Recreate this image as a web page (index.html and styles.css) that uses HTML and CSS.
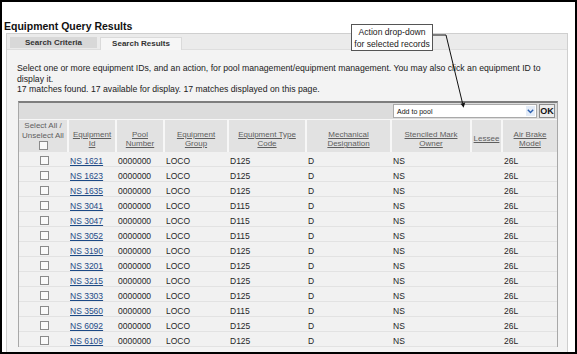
FILE: index.html
```html
<!DOCTYPE html>
<html>
<head>
<meta charset="utf-8">
<title>Equipment Query Results</title>
<link rel="stylesheet" href="styles.css">
</head>
<body>
<div class="frame">
  <h1 class="title">Equipment Query Results</h1>
  <div class="tabset">
    <div class="tabs">
      <div class="tab tab-off">Search Criteria</div>
      <div class="tab tab-on">Search Results</div>
    </div>
    <div class="panel">
      <p class="intro">Select one or more equipment IDs, and an action, for pool management/equipment management. You may also click an equipment ID to<br>display it.<br>17 matches found. 17 available for display. 17 matches displayed on this page.</p>
      <table class="results">
        <colgroup>
          <col class="c1"><col class="c2"><col class="c3"><col class="c4"><col class="c5"><col class="c6"><col class="c7"><col class="c8"><col class="c9">
        </colgroup>
        <thead>
          <tr class="toolbar">
            <td colspan="9">
              <div class="toolbar-inner">
                <div class="select">
                  <span class="select-text">Add to pool</span>
                  <span class="select-btn"><svg width="7" height="5" viewBox="0 0 7 5"><path d="M0.8 0.8 L3.5 3.6 L6.2 0.8" fill="none" stroke="#2a5fb0" stroke-width="1.4"/></svg></span>
                </div>
                <div class="ok">OK</div>
              </div>
            </td>
          </tr>
          <tr class="head">
            <th class="selall">Select All /<br>Unselect All<br><span class="cb cb-head"></span></th>
            <th><span class="hl">Equipment<br>Id</span></th>
            <th><span class="hl">Pool<br>Number</span></th>
            <th><span class="hl">Equipment<br>Group</span></th>
            <th><span class="hl">Equipment Type<br>Code</span></th>
            <th><span class="hl">Mechanical<br>Designation</span></th>
            <th><span class="hl">Stenciled Mark<br>Owner</span></th>
            <th><span class="hl">Lessee</span></th>
            <th><span class="hl">Air Brake<br>Model</span></th>
          </tr>
        </thead>
        <tbody>
          <tr><td class="cbc"><span class="cb"></span></td><td><a href="#">NS 1621</a></td><td>0000000</td><td>LOCO</td><td>D125</td><td>D</td><td>NS</td><td></td><td>26L</td></tr>
          <tr><td class="cbc"><span class="cb"></span></td><td><a href="#">NS 1623</a></td><td>0000000</td><td>LOCO</td><td>D125</td><td>D</td><td>NS</td><td></td><td>26L</td></tr>
          <tr><td class="cbc"><span class="cb"></span></td><td><a href="#">NS 1635</a></td><td>0000000</td><td>LOCO</td><td>D125</td><td>D</td><td>NS</td><td></td><td>26L</td></tr>
          <tr><td class="cbc"><span class="cb"></span></td><td><a href="#">NS 3041</a></td><td>0000000</td><td>LOCO</td><td>D115</td><td>D</td><td>NS</td><td></td><td>26L</td></tr>
          <tr><td class="cbc"><span class="cb"></span></td><td><a href="#">NS 3047</a></td><td>0000000</td><td>LOCO</td><td>D115</td><td>D</td><td>NS</td><td></td><td>26L</td></tr>
          <tr><td class="cbc"><span class="cb"></span></td><td><a href="#">NS 3052</a></td><td>0000000</td><td>LOCO</td><td>D115</td><td>D</td><td>NS</td><td></td><td>26L</td></tr>
          <tr><td class="cbc"><span class="cb"></span></td><td><a href="#">NS 3190</a></td><td>0000000</td><td>LOCO</td><td>D125</td><td>D</td><td>NS</td><td></td><td>26L</td></tr>
          <tr><td class="cbc"><span class="cb"></span></td><td><a href="#">NS 3201</a></td><td>0000000</td><td>LOCO</td><td>D125</td><td>D</td><td>NS</td><td></td><td>26L</td></tr>
          <tr><td class="cbc"><span class="cb"></span></td><td><a href="#">NS 3215</a></td><td>0000000</td><td>LOCO</td><td>D125</td><td>D</td><td>NS</td><td></td><td>26L</td></tr>
          <tr><td class="cbc"><span class="cb"></span></td><td><a href="#">NS 3303</a></td><td>0000000</td><td>LOCO</td><td>D125</td><td>D</td><td>NS</td><td></td><td>26L</td></tr>
          <tr><td class="cbc"><span class="cb"></span></td><td><a href="#">NS 3560</a></td><td>0000000</td><td>LOCO</td><td>D115</td><td>D</td><td>NS</td><td></td><td>26L</td></tr>
          <tr><td class="cbc"><span class="cb"></span></td><td><a href="#">NS 6092</a></td><td>0000000</td><td>LOCO</td><td>D125</td><td>D</td><td>NS</td><td></td><td>26L</td></tr>
          <tr><td class="cbc"><span class="cb"></span></td><td><a href="#">NS 6109</a></td><td>0000000</td><td>LOCO</td><td>D125</td><td>D</td><td>NS</td><td></td><td>26L</td></tr>
        </tbody>
      </table>
    </div>
  </div>
  <div class="callout">Action drop-down<br>for selected records</div>
  <svg class="arrow" width="573" height="350" viewBox="0 0 573 350">
    <polyline points="431,33 444,33 460.6,101.5" fill="none" stroke="#111" stroke-width="1"/>
    <polygon points="461.6,105.8 463.2,100.6 458.6,101.7" fill="#111"/>
  </svg>
</div>
</body>
</html>
```
FILE: styles.css
```css
html, body {
  margin: 0;
  padding: 0;
  background: #fff;
}

.frame {
  position: relative;
  width: 577px;
  height: 354px;
  box-sizing: border-box;
  border: 2px solid #000;
  overflow: hidden;
  background: #fff;
  font-family: "Liberation Sans", Arial, sans-serif;
  color: #222;
}

.title {
  margin: 18px 0 0 2px;
  font-size: 10.5px;
  line-height: 13px;
  font-weight: bold;
  color: #111;
}

.tabset {
  margin-left: 4px;
  width: 562px;
  box-sizing: border-box;
  border: 1px solid #cfcfcf;
  background: #f3f3f3;
  height: 340px;
}

.tabs {
  height: 16px;
  background: #ebebeb;
  display: flex;
  align-items: flex-end;
  padding-left: 3px;
  border-bottom: 1px solid #dedede;
  box-sizing: border-box;
}

.tab {
  font-size: 8px;
  font-weight: bold;
  color: #333;
  text-align: center;
  box-sizing: border-box;
}

.tab-off {
  width: 87px;
  height: 11px;
  line-height: 11px;
  margin-bottom: 1px;
  background: #d8d8d8;
}

.tab-on {
  width: 82px;
  height: 13px;
  line-height: 12px;
  margin-left: 3px;
  margin-bottom: -1px;
  background: #f6f6f6;
  border: 1px solid #dadada;
  border-bottom: none;
}

.panel {
  padding: 13px 0 0 10px;
}

.intro {
  margin: 0;
  font-size: 8.7px;
  line-height: 10.7px;
  color: #222;
}

.results {
  margin: 6px 0 0 1px;
  width: 540px;
  table-layout: fixed;
  border-collapse: separate;
  border-spacing: 0;
  border-top: 2px solid #7d7d7d;
  border-left: 1px solid #a8a8a8;
  border-right: 1px solid #a8a8a8;
  background: #f1f1f1;
}

.c1 { width: 48px; }
.c2 { width: 48px; }
.c3 { width: 48px; }
.c4 { width: 64px; }
.c5 { width: 78px; }
.c6 { width: 85px; }
.c7 { width: 80px; }
.c8 { width: 31px; }
.c9 { width: 56px; }

.toolbar td {
  height: 16px;
  padding: 0;
  background: #dcdcdc;
}

.toolbar-inner {
  display: flex;
  justify-content: flex-end;
  align-items: center;
  gap: 2px;
  padding-right: 2px;
  height: 16px;
}

.select {
  width: 144px;
  height: 14px;
  box-sizing: border-box;
  border: 1px solid #a9a9a9;
  background: #fff;
  display: flex;
  align-items: center;
  justify-content: space-between;
}

.select-text {
  font-size: 7px;
  color: #111;
  padding-left: 3px;
}

.select-btn {
  width: 9px;
  height: 10px;
  margin-right: 1px;
  background: #e4ecf7;
  display: flex;
  align-items: center;
  justify-content: center;
}

.ok {
  width: 16px;
  height: 14px;
  box-sizing: border-box;
  border: 1px solid #8c8c8c;
  background: #ececec;
  font-size: 9px;
  line-height: 12px;
  font-weight: bold;
  text-align: center;
  color: #111;
}

.head {
  height: 33px;
}

.head th {
  background: #e2e2e2;
  border-top: 1px solid #f7f7f7;
  border-left: 2px solid #f7f7f7;
  font-size: 8px;
  line-height: 9.5px;
  font-weight: normal;
  color: #5e5e5e;
  text-align: center;
  vertical-align: middle;
  padding: 6px 0 0 0;
}

.head th:first-child {
  border-left: none;
}

.head th.selall {
  padding-top: 1px;
  vertical-align: top;
}

.hl {
  text-decoration: underline;
}

.cb {
  display: inline-block;
  width: 9px;
  height: 9px;
  box-sizing: border-box;
  border: 1px solid #8a8a8a;
  background: #fafafa;
  vertical-align: middle;
}

.cb-head {
  margin-top: 1px;
}

tbody td {
  font-size: 8.5px;
  line-height: 10px;
  padding: 4px 0 0 3px;
  border-bottom: 1px solid #e2e2e2;
  color: #262626;
  white-space: nowrap;
  overflow: hidden;
  vertical-align: top;
}

tbody td.cbc {
  text-align: center;
  padding-left: 3px;
  padding-top: 3px;
  line-height: 11px;
}

tbody a {
  color: #1d4a86;
  text-decoration: underline;
}

.callout {
  position: absolute;
  left: 349px;
  top: 22px;
  width: 82px;
  height: 27px;
  box-sizing: border-box;
  border: 1px solid #555;
  background: #fff;
  font-size: 8.6px;
  line-height: 12px;
  text-align: center;
  color: #222;
  padding-top: 1px;
}

.arrow {
  position: absolute;
  left: 0;
  top: 0;
  pointer-events: none;
}
```
